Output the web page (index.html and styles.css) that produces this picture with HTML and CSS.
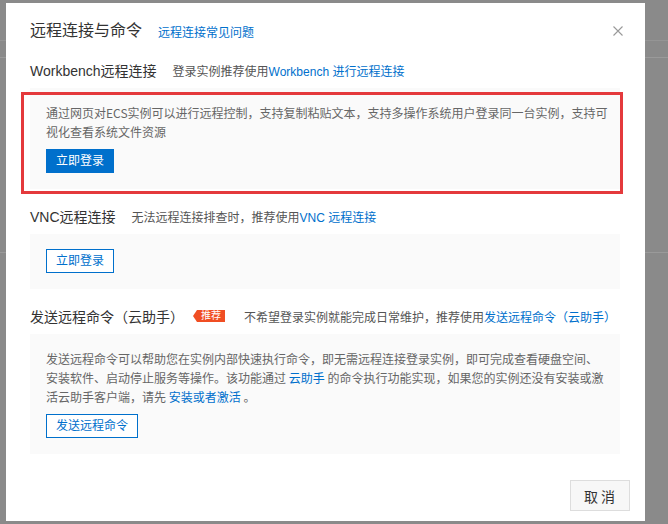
FILE: index.html
```html
<!DOCTYPE html>
<html lang="zh-CN">
<head>
    <meta charset="UTF-8">
    <meta name="viewport" content="width=device-width, initial-scale=1.0">
    <title>远程连接与命令</title>
    <link rel="stylesheet" href="styles.css">
</head>
<body>

<div class="modal">
    <div class="modal-header">
        <span class="modal-title">远程连接与命令</span>
        <a class="link help-link">远程连接常见问题</a>
        <span class="close">
            <svg width="10" height="10" viewBox="0 0 10 10"><path d="M0.5 0.5L9.5 9.5M9.5 0.5L0.5 9.5" stroke="#999" stroke-width="1.1" fill="none"/></svg>
        </span>
    </div>

    <div class="modal-body">
        <!-- Workbench -->
        <div class="section-head">
            <span class="section-title">Workbench远程连接</span>
            <span class="section-desc">登录实例推荐使用<a class="link">Workbench 进行远程连接</a></span>
        </div>
        <div class="panel panel-marked">
            <p class="panel-text">通过网页对ECS实例可以进行远程控制，支持复制粘贴文本，支持多操作系统用户登录同一台实例，支持可视化查看系统文件资源</p>
            <button class="btn btn-primary">立即登录</button>
        </div>

        <!-- VNC -->
        <div class="section-head">
            <span class="section-title">VNC远程连接</span>
            <span class="section-desc">无法远程连接排查时，推荐使用<a class="link">VNC 远程连接</a></span>
        </div>
        <div class="panel">
            <button class="btn btn-outline">立即登录</button>
        </div>

        <!-- 云助手 -->
        <div class="section-head">
            <span class="section-title">发送远程命令（云助手）</span>
            <span class="badge">推荐</span>
            <span class="section-desc">不希望登录实例就能完成日常维护，推荐使用<a class="link">发送远程命令（云助手）</a></span>
        </div>
        <div class="panel">
            <p class="panel-text">发送远程命令可以帮助您在实例内部快速执行命令，即无需远程连接登录实例，即可完成查看硬盘空间、安装软件、启动停止服务等操作。该功能通过 <a class="link">云助手</a> 的命令执行功能实现，如果您的实例还没有安装或激活云助手客户端，请先 <a class="link">安装或者激活</a> 。</p>
            <button class="btn btn-outline">发送远程命令</button>
        </div>
    </div>

    <div class="modal-footer">
        <button class="btn-cancel">取消</button>
    </div>
</div>

</body>
</html>
```

FILE: styles.css
```css
body {
    margin: 0;
    height: 524px;
    overflow: hidden;
    font-family: "Liberation Sans", "Noto Sans CJK SC", sans-serif;
    background:
        linear-gradient(#9a9a9a, #9a9a9a) 0 57px / 100% 1px no-repeat,
        linear-gradient(#9a9a9a, #9a9a9a) 0 252px / 100% 1px no-repeat,
        linear-gradient(#959595, #959595) 0 40px / 100% 1px no-repeat,
        #8a8a8a;
}
.modal {
    width: 639px;
    margin: 3px 0 0 6px;
    background: #ffffff;
}
.modal-header {
    display: flex;
    align-items: center;
    padding: 16px 22px 0 24px;
    height: 24px;
}
.modal-title {
    font-size: 16px;
    line-height: 24px;
    color: #333;
}
.help-link {
    margin-left: 16px;
    font-size: 12px;
}
.close {
    margin-left: auto;
    display: flex;
}
.link {
    color: #0070cc;
    text-decoration: none;
    cursor: pointer;
}
.modal-body {
    padding: 17px 25px 0 24px;
}
.section-head {
    display: flex;
    align-items: center;
    height: 20px;
    margin-bottom: 8px;
    white-space: nowrap;
}
.section-title {
    font-size: 14px;
    color: #333;
}
.section-desc {
    margin-left: 16px;
    font-size: 12px;
    color: #555;
}
.badge {
    position: relative;
    margin: 0 3px 0 13px;
    padding: 0 4px;
    height: 12px;
    line-height: 12px;
    font-size: 10px;
    color: #fff;
    background: #f04e23;
}
.badge::before {
    content: "";
    position: absolute;
    left: -4px;
    top: 0;
    border-top: 6px solid transparent;
    border-bottom: 6px solid transparent;
    border-right: 4px solid #f04e23;
}
.panel {
    background: #fafafa;
    padding: 15px 12px 16px 16px;
    margin-bottom: 17px;
}
.panel-marked {
    position: relative;
}
/* 标注框 */
.panel-marked::after {
    content: "";
    position: absolute;
    top: 4px;
    left: -9px;
    right: -3px;
    bottom: -5px;
    border: 3px solid #e4393c;
}
.panel-text {
    margin: 0 0 8px;
    font-family: "Noto Sans CJK SC", sans-serif;
    font-size: 12px;
    line-height: 19px;
    color: #666;
}
.btn {
    display: block;
    height: 24px;
    padding: 0 9px;
    font-family: inherit;
    font-size: 12px;
    line-height: 22px;
    cursor: pointer;
}
.btn-primary {
    background: #0070cc;
    border: 1px solid #0070cc;
    color: #fff;
}
.btn-outline {
    background: #fff;
    border: 1px solid #0070cc;
    color: #0070cc;
}
.modal-footer {
    display: flex;
    justify-content: flex-end;
    padding: 9px 15px 10px 24px;
}
.btn-cancel {
    height: 31px;
    padding: 0 11px 0 13px;
    background: #f7f7f7;
    border: 1px solid #ddd;
    color: #333;
    font-family: inherit;
    font-size: 14px;
    letter-spacing: 3px;
    cursor: pointer;
}
```
